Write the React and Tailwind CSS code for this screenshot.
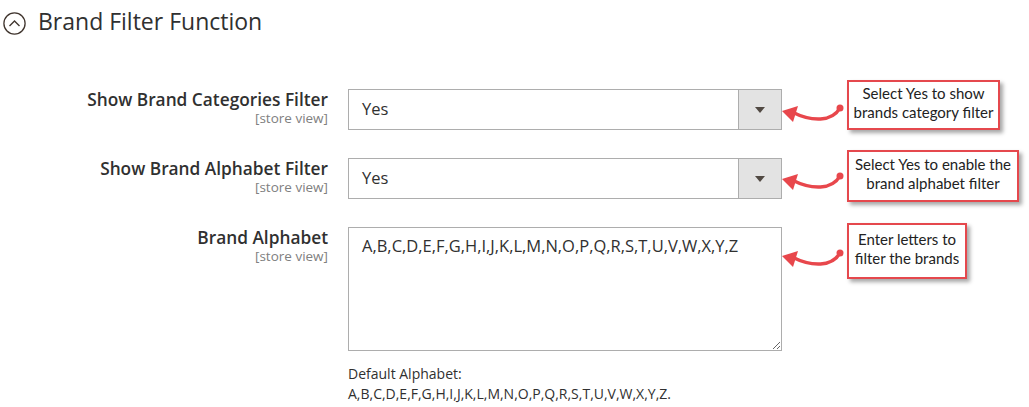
import React from "react";

const Select = ({ value }) => (
  <div className="flex h-[41px] w-[434px] border border-[#adadad] bg-white">
    <div className="flex flex-1 items-center pl-[13px] text-[16.5px] text-[#303030]">{value}</div>
    <div className="flex w-[43px] items-center justify-center border-l border-[#adadad] bg-[#e3e3e3]">
      <span className="h-0 w-0 border-x-[5px] border-t-[6px] border-x-transparent border-t-[#514943]" />
    </div>
  </div>
);

const Label = ({ text }) => (
  <div className="pt-[1px] text-right">
    <div className="text-[17.3px] font-semibold leading-[20px] text-[#303030]">{text}</div>
    <div className="text-[13.5px] leading-[16px] text-[#808080]">[store view]</div>
  </div>
);

const Callout = ({ className, lines }) => (
  <div
    className={
      "absolute flex flex-col items-center justify-center border-2 border-[#e5484d] bg-white pb-[4px] font-['Lato'] text-[15px] leading-[19px] text-[#222] shadow-[3px_3px_4px_rgba(0,0,0,0.35)] " +
      className
    }
  >
    {lines.map((l) => (
      <span key={l} className="whitespace-nowrap">{l}</span>
    ))}
  </div>
);

// curved pointer, drawn relative to the dot
const Pointer = ({ dy }) => (
  <g transform={`translate(0 ${dy})`}>
    <path d="M840 108 C 832 122 812 122 792 112" fill="none" stroke="#e8474c" strokeWidth="3.5" strokeLinecap="round" />
    <circle cx="840" cy="108" r="3.5" fill="#e8474c" />
    <polygon points="782,111 798,106 793,122" fill="#e8474c" />
  </g>
);

export default function App() {
  return (
    <div className="relative h-[407px] w-[1029px] overflow-hidden bg-white font-['Open_Sans',sans-serif]">
      {/* section header */}
      <div className="flex items-start pt-[7px]">
        <svg width="23" height="23" viewBox="0 0 23 23" className="ml-[3px] mt-[5px]">
          <circle cx="11.5" cy="11.5" r="10.6" fill="none" stroke="#41362f" strokeWidth="1.3" />
          <path d="M6.5 14 L11.5 9 L16.5 14" fill="none" stroke="#41362f" strokeWidth="1.4" />
        </svg>
        <h2 className="ml-[12px] text-[23px] leading-[28px] text-[#303030]">Brand Filter Function</h2>
      </div>

      {/* form */}
      <div className="mt-[54px] grid grid-cols-[328px_434px] gap-x-[20px] gap-y-[28px]">
        <Label text="Show Brand Categories Filter" />
        <Select value="Yes" />

        <Label text="Show Brand Alphabet Filter" />
        <Select value="Yes" />

        <Label text="Brand Alphabet" />
        <div>
          <textarea
            readOnly
            defaultValue="A,B,C,D,E,F,G,H,I,J,K,L,M,N,O,P,Q,R,S,T,U,V,W,X,Y,Z"
            className="block h-[124px] w-[434px] border border-[#adadad] px-[13px] pt-[7px] text-[16.5px] leading-[22px] text-[#303030] outline-none"
          />
          <div className="mt-[13px] text-[14px] leading-[20px] text-[#303030]">
            <div>Default Alphabet:</div>
            <div>A,B,C,D,E,F,G,H,I,J,K,L,M,N,O,P,Q,R,S,T,U,V,W,X,Y,Z.</div>
          </div>
        </div>
      </div>

      {/* annotations */}
      <svg className="pointer-events-none absolute left-0 top-0" width="1029" height="407">
        <Pointer dy={0} />
        <Pointer dy={68} />
        <Pointer dy={145} />
      </svg>
      <Callout className="left-[847px] top-[80px] h-[50px] w-[153px]" lines={["Select Yes to show", "brands category filter"]} />
      <Callout className="left-[847px] top-[150px] h-[52px] w-[172px]" lines={["Select Yes to enable the", "brand alphabet filter"]} />
      <Callout className="left-[847px] top-[223px] h-[56px] w-[120px]" lines={["Enter letters to", "filter the brands"]} />
    </div>
  );
}
